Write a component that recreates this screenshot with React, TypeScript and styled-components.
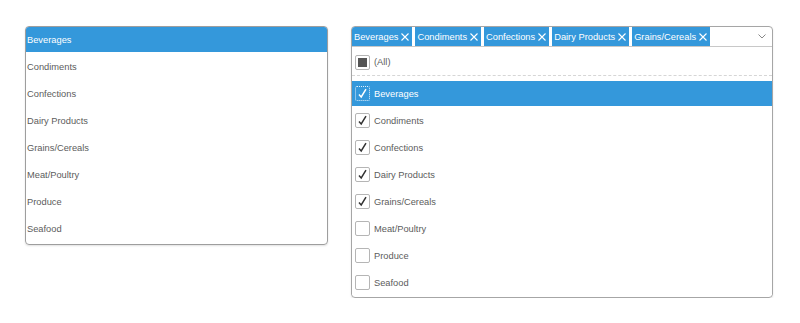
import styled, { createGlobalStyle } from 'styled-components';

const GlobalStyle = createGlobalStyle`
  body {
    margin: 0;
    background: #fff;
    font-family: "Liberation Sans", Arial, sans-serif;
  }
`;

const categories = [
  'Beverages',
  'Condiments',
  'Confections',
  'Dairy Products',
  'Grains/Cereals',
  'Meat/Poultry',
  'Produce',
  'Seafood',
];

const checked = ['Beverages', 'Condiments', 'Confections', 'Dairy Products', 'Grains/Cereals'];

const Page = styled.div`
  display: flex;
  align-items: flex-start;
  padding: 26px 0 0 25px;
  gap: 23px;
`;

const ListBox = styled.div`
  width: 301px;
  border: 1px solid #9e9e9e;
  border-radius: 4px;
  overflow: hidden;
  box-shadow: 0 1px 2px rgba(0, 0, 0, 0.12);
  padding-bottom: 1px;
`;

const ListRow = styled.div<{ $active?: boolean }>`
  height: 25px;
  margin-bottom: 2px;
  display: flex;
  align-items: center;
  padding-left: 1px;
  font-size: 9.3px;
  color: ${({ $active }) => ($active ? '#fff' : '#5c5c5c')};
  background: ${({ $active }) => ($active ? '#3498db' : '#fff')};
`;

const MultiBox = styled.div`
  width: 420px;
  border: 1px solid #a6a6a6;
  border-radius: 4px;
  overflow: hidden;
  box-shadow: 0 1px 2px rgba(0, 0, 0, 0.1);
`;

const Header = styled.div`
  display: flex;
  align-items: center;
  height: 19px;
  border-bottom: 1px solid #c8c8c8;
`;

const Chips = styled.div`
  display: flex;
  flex: 1;
  gap: 3px;
  height: 100%;
`;

const Chip = styled.span`
  display: flex;
  align-items: center;
  gap: 3px;
  flex-shrink: 0;
  white-space: nowrap;
  background: #3498db;
  color: #fff;
  font-size: 9.3px;
  padding: 0 3px 0 2px;
  height: 100%;
`;

const Chevron = styled.span`
  width: 18px;
  display: flex;
  align-items: center;
  justify-content: center;
  margin-right: 1px;
`;

const AllRow = styled.div`
  height: 26px;
  padding: 2px 0 0 3px;
  display: flex;
  align-items: center;
  gap: 4px;
  font-size: 9.3px;
  color: #5c5c5c;
  border-bottom: 1px dashed #d6d6d6;
`;

const Items = styled.div`
  padding-top: 5px;
`;

const ItemRow = styled.div<{ $active?: boolean }>`
  height: 25px;
  margin-bottom: 2px;
  display: flex;
  align-items: center;
  gap: 4px;
  padding-left: 3px;
  font-size: 9.3px;
  color: ${({ $active }) => ($active ? '#fff' : '#5c5c5c')};
  background: ${({ $active }) => ($active ? '#3498db' : '#fff')};
`;

const Box = styled.span<{ $active?: boolean }>`
  width: 13px;
  height: 13px;
  border: 1px ${({ $active }) => ($active ? 'dotted #e3f0fb' : 'solid #b5b5b5')};
  border-radius: 2px;
  background: ${({ $active }) => ($active ? 'transparent' : '#fff')};
  display: flex;
  align-items: center;
  justify-content: center;
  flex-shrink: 0;
`;

const Indeterminate = styled.span`
  width: 9px;
  height: 9px;
  background: #555;
`;

const Cross = () => (
  <svg width="8" height="8" viewBox="0 0 8 8">
    <path d="M0.5 0.5 L7.5 7.5 M7.5 0.5 L0.5 7.5" stroke="#fff" strokeWidth="1.1" fill="none" />
  </svg>
);

const Check = ({ color }: { color: string }) => (
  <svg width="11" height="11" viewBox="0 0 11 11">
    <path d="M2 6.5 L4.2 9 L9 1.2" stroke={color} strokeWidth="1.5" fill="none" />
  </svg>
);

const App = () => (
  <>
    <GlobalStyle />
    <Page>
      <ListBox>
        {categories.map((c, i) => (
          <ListRow key={c} $active={i === 0}>
            {c}
          </ListRow>
        ))}
      </ListBox>
      <MultiBox>
        <Header>
          <Chips>
            {checked.map((c) => (
              <Chip key={c}>
                {c}
                <Cross />
              </Chip>
            ))}
          </Chips>
          <Chevron>
            <svg width="8" height="5" viewBox="0 0 8 5">
              <path d="M0.5 0.5 L4 4 L7.5 0.5" stroke="#888" strokeWidth="1" fill="none" />
            </svg>
          </Chevron>
        </Header>
        <AllRow>
          <Box>
            <Indeterminate />
          </Box>
          (All)
        </AllRow>
        <Items>
          {categories.map((c, i) => (
            <ItemRow key={c} $active={i === 0}>
              <Box $active={i === 0}>
                {checked.includes(c) && <Check color={i === 0 ? '#fff' : '#333'} />}
              </Box>
              {c}
            </ItemRow>
          ))}
        </Items>
      </MultiBox>
    </Page>
  </>
);

export default App;
